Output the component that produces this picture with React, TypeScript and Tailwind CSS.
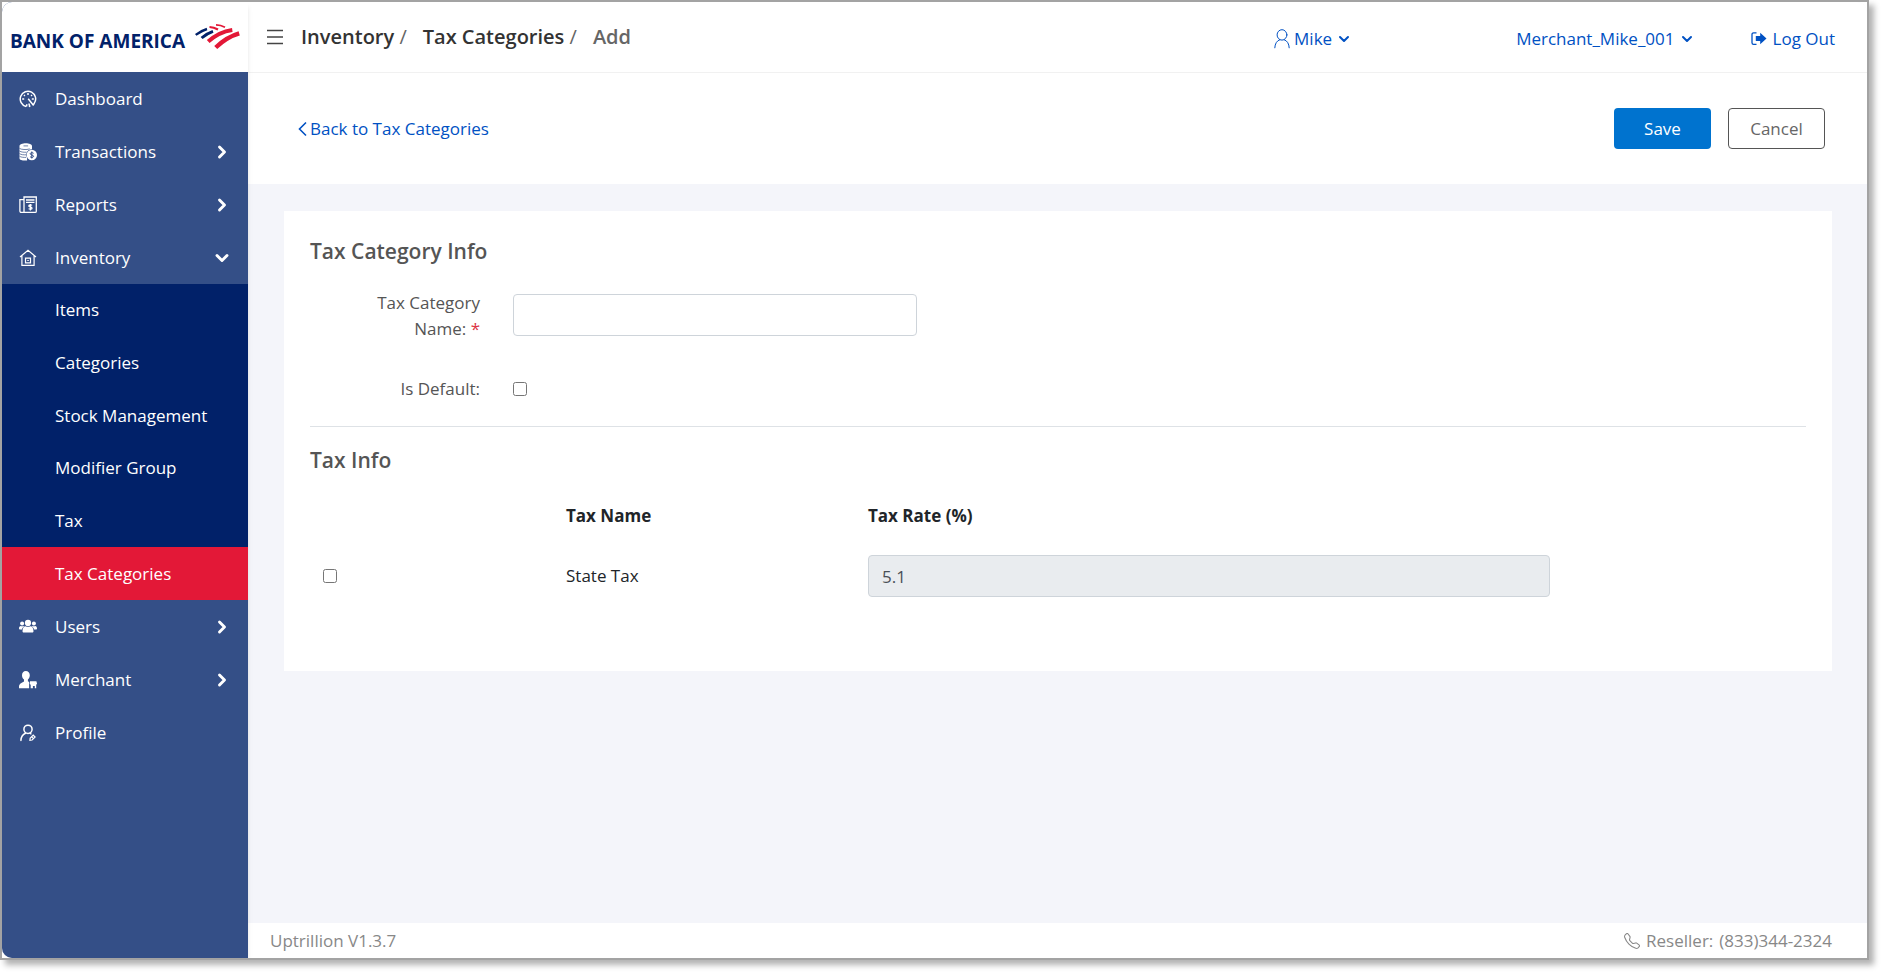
import { useState } from 'react';
import type { ReactNode } from 'react';
import { BsTelephone } from 'react-icons/bs';
import { ChevronDown, ChevronRight } from 'lucide-react';

type NavItem = {
    label: string;
    icon: ReactNode;
    expandable?: boolean;
    children?: string[];
};

type TaxRow = {
    id: string;
    name: string;
    rate: string;
};

const DashboardIcon = () => (
    <svg viewBox="0 0 18 18" className="size-[18px]" fill="none" stroke="currentColor" strokeWidth="1.5">
        <path d="M7.200 16.400A7.700 7.700 0 1 1 15.200 13.400l-1 1.600-5-6.200M9.800 13.600l1 2.600-1 .3M7.400 16.500l.6-2.300" strokeLinejoin="round" />
        <path d="M9 3v2M3.200 9h2M12.800 9h2M5 5l.9.9M13 5l-.9.9" />
    </svg>
);

const CoinsIcon = () => (
    <svg viewBox="0 0 18 18" className="size-[18px]">
        <path
            fill="currentColor"
            d="M.5 3C.5 1.400 3.500.3 6.800.3s6.200 1.100 6.200 2.700v3.200a5.500 5.500 0 0 0-4.900 8.600v2.700c-4.300.4-7.600-.6-7.600-2.100z"
        />
        <path d="M.5 5.400c1.500 1.200 7 1.600 10.300.5M.5 8c1.500 1.200 5 1.400 7 1.200M.5 10.600c1.500 1.200 4.500 1.300 6.500 1.200M.5 13.200c1.500 1.200 4.500 1.300 6.700 1.200M4.500 2.900h4.600" fill="none" stroke="#344f87" strokeWidth=".7" />
        <circle cx="12.800" cy="12" r="5.200" fill="currentColor" />
        <path d="M14.600 10.300c-.6-.8-3.400-.9-3.400.4 0 1.600 3.400 1 3.400 2.600 0 1.400-2.900 1.400-3.600.3M12.800 8.500v7" fill="none" stroke="#344f87" strokeWidth="1" />
    </svg>
);

const ReportIcon = () => (
    <svg viewBox="0 0 18 18" className="size-[18px]" fill="none" stroke="currentColor" strokeWidth="1.300">
        <path d="M5 16.400V1h12.300v14.200c0 .8-.5 1.200-1.200 1.200H2.200c-.8 0-1.300-.5-1.300-1.300V3.600H5" />
        <path d="M7 4h8.500M7 6.400h8.500" />
        <path d="M13 9.400c-.7-.7-3.200-.7-3.200.5 0 1.400 3.200.8 3.200 2.300 0 1.300-2.600 1.200-3.400.4M11.400 8v6.500" />
    </svg>
);

const InventoryIcon = () => (
    <svg viewBox="0 0 18 18" className="size-[18px]" fill="none" stroke="currentColor" strokeWidth="1.200">
        <path d="M1 8 9 1.300 17 8M2.900 6.700v9.700h12.200V6.700" />
        <path d="M6.500 9.200h5v4.600h-5zM8.300 11.500h1.500" />
    </svg>
);

const UsersIcon = () => (
    <svg viewBox="0 0 18 18" className="size-[18px]" fill="currentColor">
        <circle cx="9" cy="4.900" r="3.100" />
        <circle cx="3.100" cy="5.400" r="2" />
        <circle cx="14.900" cy="5.400" r="2" />
        <path d="M3.500 13.200c0-2.900 1.300-4.900 3.200-4.900.9.700 3.700.7 4.600 0 1.900 0 3.200 2 3.200 4.900 0 .9-.5 1.400-1.400 1.400H4.900c-.9 0-1.400-.5-1.400-1.400z" />
        <path d="M0 10.500c0-1.500.7-2.600 1.800-2.600.7.500 1.700.5 2.600.1.300.2.500.4.700.600-1.100.7-1.900 1.600-2.100 2.900H1.100C.4 11.600 0 11.200 0 10.500zM18 10.500c0-1.500-.7-2.600-1.800-2.600-.7.500-1.700.5-2.600.1-.3.200-.5.400-.7.600 1.100.7 1.900 1.600 2.100 2.900h1.900c.7 0 1.100-.4 1.100-1z" />
    </svg>
);

const MerchantIcon = () => (
    <svg viewBox="0 0 18 18" className="size-[18px]" fill="currentColor">
        <path d="M6.800 0c2.400 0 4 1.700 4 4.200 0 1.900-.8 3.500-1.900 4.400v1.600l1.200.8v6.200H0v-2c0-2 1.600-3 5-4.800V8.600C3.700 7.700 3 6.100 3 4.200 3 1.700 4.500 0 6.800 0z" />
        <path d="M11 10.200h6.400l.6 2.200c0 .8-.4 1.100-.8 1.200v3.600h-1.400v-2.300h-1.900v2.300h-2.200v-3.500c-.5-.2-1-.6-1-1.300z" />
    </svg>
);

const ProfileIcon = () => (
    <svg viewBox="0 0 18 18" className="size-[18px]" fill="none" stroke="currentColor" strokeWidth="1.500" strokeLinecap="round">
        <circle cx="9" cy="5.300" r="4.100" />
        <path d="M1.900 16.400c.2-3.600 1.800-6 4.600-7.200M10.900 9.200l1 .6" />
        <path d="m11.200 14.100 3-2.900 1.900 1.900-3 2.900-2.200.3zM12.800 12.900l1.700 1.700" strokeWidth="1.200" />
    </svg>
);

const UserIcon = () => (
    <svg viewBox="0 0 16 20" className="h-5 w-4" fill="none" stroke="currentColor" strokeLinecap="round">
        <ellipse cx="8" cy="5.900" rx="4.900" ry="5.200" />
        <path d="M.8 18.800c.2-4.100 1.900-7.100 5-8.100M15.200 18.800c-.2-4.100-1.900-7.100-5-8.100" />
    </svg>
);

const LogOutIcon = () => (
    <svg viewBox="0 0 16 16" className="size-4" fill="none" stroke="currentColor">
        <path d="M5.500 1.800H2.600C1.700 1.800 1 2.500 1 3.400v8.300c0 .9.700 1.600 1.600 1.600h2.900" strokeWidth="1.300" />
        <path d="M4.800 4.900h4.400V1.800L15.500 7.500l-6.300 5.700V10H4.800z" fill="currentColor" stroke="none" />
    </svg>
);

const MenuIcon = () => (
    <svg viewBox="0 0 16 16" className="size-4" stroke="currentColor" strokeWidth="1.300">
        <path d="M0 1.500h16M0 8h16M0 14.500h16" />
    </svg>
);

const BackIcon = () => (
    <svg viewBox="0 0 10 16" className="h-4 w-[10px]" fill="none" stroke="currentColor" strokeWidth="1.600">
        <path d="M8 1.500 1.500 8 8 14.500" />
    </svg>
);

const FlagMark = () => (
    <svg viewBox="0 0 45 26" className="h-[26px] w-[45px]" fill="none">
        <g stroke="#012169">
            <path d="M.7 10.900C4 8.500 7.600 6.300 12 5" strokeWidth="2.400" />
            <path d="M6.600 14C10 11 13.600 8.800 18 7.300" strokeWidth="3" />
        </g>
        <g stroke="#e31837">
            <path d="M14.500 3c2.900.2 5.800 1.100 8.500 2.500" strokeWidth="2.200" />
            <path d="M21 .9c3.200.1 6.200.9 9 2.300" strokeWidth="1.800" />
            <path d="M13.200 17.500C19.500 11.800 28 7.200 37.300 5.900" strokeWidth="4" />
            <path d="M20.700 23.500C27 17.600 35 12 44.200 9.400" strokeWidth="4.400" />
        </g>
    </svg>
);

const navItems: NavItem[] = [
    { label: 'Dashboard', icon: <DashboardIcon /> },
    { label: 'Transactions', icon: <CoinsIcon />, expandable: true },
    { label: 'Reports', icon: <ReportIcon />, expandable: true },
    {
        label: 'Inventory',
        icon: <InventoryIcon />,
        children: ['Items', 'Categories', 'Stock Management', 'Modifier Group', 'Tax', 'Tax Categories'],
    },
    { label: 'Users', icon: <UsersIcon />, expandable: true },
    { label: 'Merchant', icon: <MerchantIcon />, expandable: true },
    { label: 'Profile', icon: <ProfileIcon /> },
];

const taxes: TaxRow[] = [{ id: 'state', name: 'State Tax', rate: '5.1' }];

function Sidebar() {
    const [active, setActive] = useState<string>('Tax Categories');

    return (
        <aside className="z-10 flex w-[246px] shrink-0 flex-col bg-[#344f87] text-white shadow-md">
            <a href="#" className="flex h-[70px] shrink-0 items-center justify-between bg-white pr-2 pl-2 text-[#012169]">
                <span className="pt-2 text-[19px] leading-6 font-bold whitespace-nowrap">BANK OF AMERICA</span>
                <FlagMark />
            </a>
            <nav>
                {navItems.map(item => (
                    <div key={item.label}>
                        <a href="#" className="flex h-[53px] items-center pr-4 pl-[17px]">
                            {item.icon}
                            <span className="ml-[18px] flex-1">{item.label}</span>
                            {item.expandable && <ChevronRight size={20} strokeWidth={3.5} />}
                            {item.children && <ChevronDown size={20} strokeWidth={3.5} />}
                        </a>
                        {item.children && (
                            <ul className="flex h-[316px] flex-col bg-[#012169]">
                                {item.children.map(child => (
                                    <li key={child} className="flex flex-1">
                                        <a
                                            href="#"
                                            onClick={() => setActive(child)}
                                            className={`flex flex-1 items-center pl-[53px] ${active === child ? 'bg-[#e31837]' : ''}`}
                                        >
                                            {child}
                                        </a>
                                    </li>
                                ))}
                            </ul>
                        )}
                    </div>
                ))}
            </nav>
        </aside>
    );
}

function Header() {
    return (
        <header className="flex h-[71px] shrink-0 items-center border-b border-[#f1f1f1] bg-white pr-8 pl-[19px]">
            <button type="button" aria-label="Toggle menu" className="text-[#444]">
                <MenuIcon />
            </button>
            <ol className="ml-[18px] flex flex-1 items-center gap-4 text-[20px] font-semibold text-[#333]">
                <li>
                    <a href="#">Inventory</a> <span className="font-normal text-[#666]">/</span>
                </li>
                <li>
                    <a href="#">Tax Categories</a> <span className="font-normal text-[#666]">/</span>
                </li>
                <li className="text-[#666]">Add</li>
            </ol>
            <div className="flex items-center pt-1 text-[#0051c3]">
                <button type="button" className="mr-[164px] flex items-center gap-1">
                    <UserIcon />
                    Mike
                    <ChevronDown size={16} strokeWidth={3} />
                </button>
                <button type="button" className="mr-14 flex items-center gap-1">
                    Merchant_Mike_001
                    <ChevronDown size={16} strokeWidth={3} />
                </button>
                <a href="#" className="flex items-center gap-[6px]">
                    <LogOutIcon />
                    Log Out
                </a>
            </div>
        </header>
    );
}

export default function App() {
    const [name, setName] = useState<string>('');
    const [isDefault, setIsDefault] = useState<boolean>(false);
    const [selected, setSelected] = useState<string[]>([]);

    const toggleTax = (id: string) => {
        setSelected(prev => (prev.includes(id) ? prev.filter(t => t !== id) : [...prev, id]));
    };

    return (
        <div className="flex min-h-screen bg-white pr-[15px] pb-[15px] font-['Open_Sans','Noto_Sans',sans-serif] text-[17px] leading-[26px]">
            <div className="flex flex-1 border-2 border-[#a3a3a3] shadow-[5px_5px_6px_rgba(0,0,0,0.3)]">
                <div className="flex flex-1 overflow-hidden rounded-[10px]">
                    <Sidebar />
                    <div className="flex min-w-0 flex-1 flex-col bg-[#f4f5fa]">
                        <Header />
                        <div className="flex h-[111px] shrink-0 items-center justify-between bg-white pr-[42px] pl-[50px]">
                            <a href="#" className="flex items-center gap-[2px] text-[#0051c3]">
                                <BackIcon />
                                Back to Tax Categories
                            </a>
                            <div className="flex gap-[17px]">
                                <button type="submit" form="tax-category" className="h-[41px] w-[97px] rounded bg-[#0073cf] text-white">
                                    Save
                                </button>
                                <button type="button" className="h-[41px] w-[97px] rounded border border-[#555] bg-white text-[#666]">
                                    Cancel
                                </button>
                            </div>
                        </div>

                        <main className="flex-1 pt-[27px] pr-[35px] pl-9">
                            <form
                                id="tax-category"
                                onSubmit={e => e.preventDefault()}
                                className="bg-white px-[26px] pt-[27px] pb-[53px] text-[#555]"
                            >
                                <h2 className="text-[21px] font-semibold">Tax Category Info</h2>
                                <div className="mt-[26px] flex">
                                    <label htmlFor="category-name" className="w-[170px] text-right">
                                        <span className="block">Tax Category</span>
                                        <span>Name:</span> <span className="text-[#dc3545]">*</span>
                                    </label>
                                    <input
                                        id="category-name"
                                        type="text"
                                        value={name}
                                        onChange={e => setName(e.target.value)}
                                        className="mt-1 ml-[33px] h-[42px] w-[404px] rounded border border-[#ced4da] px-3"
                                    />
                                </div>
                                <div className="mt-[34px] flex items-center">
                                    <label htmlFor="is-default" className="w-[170px] text-right">
                                        Is Default:
                                    </label>
                                    <input
                                        id="is-default"
                                        type="checkbox"
                                        checked={isDefault}
                                        onChange={e => setIsDefault(e.target.checked)}
                                        className="ml-[33px] size-[14px]"
                                    />
                                </div>
                                <hr className="mt-6 border-[#dee2e6]" />
                                <h2 className="mt-5 text-[21px] font-semibold">Tax Info</h2>
                                <table className="mt-[25px] w-full table-fixed text-left text-[#212529]">
                                    <thead>
                                        <tr className="h-[36px]">
                                            <th className="w-[256px]" />
                                            <th className="w-[302px] font-bold">Tax Name</th>
                                            <th className="font-bold">Tax Rate (%)</th>
                                        </tr>
                                    </thead>
                                    <tbody>
                                        {taxes.map(tax => (
                                            <tr key={tax.id} className="h-[84px]">
                                                <td className="pl-[13px]">
                                                    <input
                                                        type="checkbox"
                                                        aria-label={tax.name}
                                                        checked={selected.includes(tax.id)}
                                                        onChange={() => toggleTax(tax.id)}
                                                        className="block size-[14px]"
                                                    />
                                                </td>
                                                <td>{tax.name}</td>
                                                <td className="pr-64">
                                                    <input
                                                        type="text"
                                                        aria-label="Tax Rate (%)"
                                                        value={tax.rate}
                                                        disabled
                                                        className="block h-[42px] w-full rounded border border-[#ced4da] bg-[#e9ecef] px-[13px] text-[#495057]"
                                                    />
                                                </td>
                                            </tr>
                                        ))}
                                    </tbody>
                                </table>
                            </form>
                        </main>

                        <footer className="flex h-[35px] shrink-0 items-center justify-between bg-white pr-[35px] pl-[22px] text-[#888]">
                            <span>Uptrillion V1.3.7</span>
                            <span className="flex items-center gap-[6px]">
                                <BsTelephone size={16} />
                                <span>Reseller:</span>
                                <a href="tel:8333442324">(833)344-2324</a>
                            </span>
                        </footer>
                    </div>
                </div>
            </div>
        </div>
    );
}
